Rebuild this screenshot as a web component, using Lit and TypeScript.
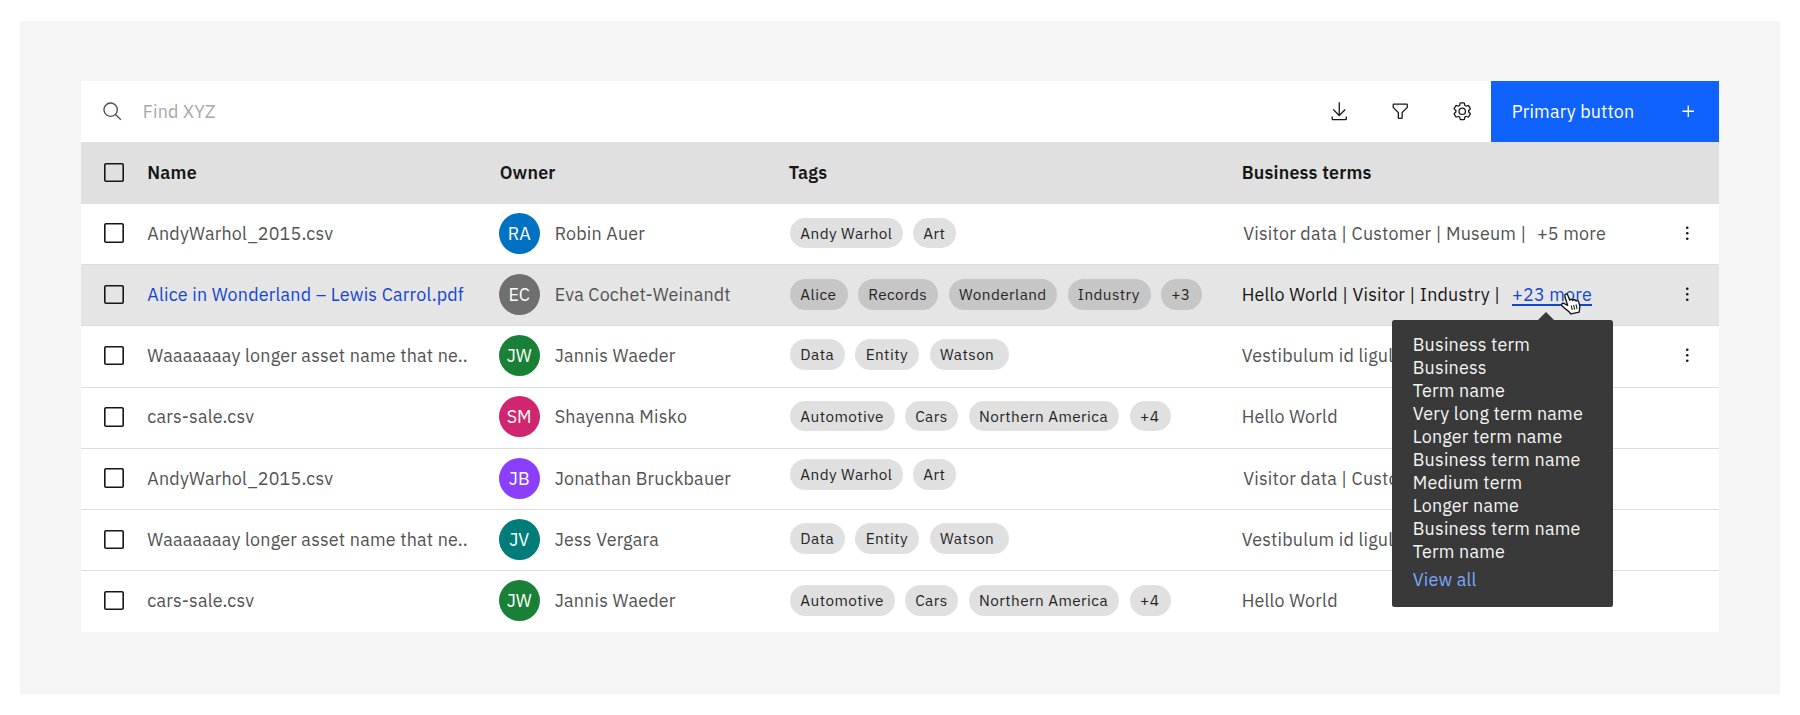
import { LitElement, html, svg, css, nothing } from "lit";
import { customElement } from "lit/decorators.js";
import { classMap } from "lit/directives/class-map.js";

interface Tag { label: string; size: number; }
interface Row {
  name: string;
  initials: string;
  tone: string;
  owner: string;
  tags: Tag[];
  lift: number;
  terms: string;
  inset?: boolean;
  more?: string;
  menu?: boolean;
  active?: boolean;
}

const tag = (label: string, size: number): Tag => ({ label, size });

const andyTags = [tag("Andy Warhol", 112.5), tag("Art", 43)];
const dataTags = [tag("Data", 55), tag("Entity", 64), tag("Watson", 79.5)];
const carTags = [tag("Automotive", 104.5), tag("Cars", 53.5), tag("Northern America", 150.8), tag("+4", 41)];

const rows: Row[] = [
  { name: "AndyWarhol_2015.csv", initials: "RA", tone: "blue", owner: "Robin Auer", tags: andyTags, lift: 0.2,
    terms: "Visitor data | Customer | Museum |", inset: true, more: "+5 more", menu: true },
  { name: "Alice in Wonderland – Lewis Carrol.pdf", initials: "EC", tone: "gray", owner: "Eva Cochet-Weinandt",
    tags: [tag("Alice", 57.5), tag("Records", 80.5), tag("Wonderland", 108.6), tag("Industry", 83), tag("+3", 41.2)],
    lift: 0, terms: "Hello World | Visitor | Industry |", more: "+23 more", menu: true, active: true },
  { name: "Waaaaaaay longer asset name that ne..", initials: "JW", tone: "green", owner: "Jannis Waeder", tags: dataTags, lift: 1,
    terms: "Vestibulum id ligula", menu: true },
  { name: "cars-sale.csv", initials: "SM", tone: "magenta", owner: "Shayenna Misko", tags: carTags, lift: 1,
    terms: "Hello World" },
  { name: "AndyWarhol_2015.csv", initials: "JB", tone: "purple", owner: "Jonathan Bruckbauer", tags: andyTags, lift: 3.5,
    terms: "Visitor data | Customer", inset: true },
  { name: "Waaaaaaay longer asset name that ne..", initials: "JV", tone: "teal", owner: "Jess Vergara", tags: dataTags, lift: 0.8,
    terms: "Vestibulum id ligula" },
  { name: "cars-sale.csv", initials: "JW", tone: "green", owner: "Jannis Waeder", tags: carTags, lift: 0.3,
    terms: "Hello World" },
];

const termList = [
  "Business term",
  "Business",
  "Term name",
  "Very long term name",
  "Longer term name",
  "Business term name",
  "Medium term",
  "Longer name",
  "Business term name",
  "Term name",
];

const icon = (shape: unknown, size = 20.5) =>
  html`<svg class="icon" width=${size} height=${size} viewBox="0 0 32 32" fill="currentColor">${shape}</svg>`;

const searchShape = svg`<path d="M29 27.586l-7.552-7.552a11.018 11.018 0 10-1.414 1.414L27.586 29zM4 13a9 9 0 119 9 9.01 9.01 0 01-9-9z"/>`;
const downloadShape = svg`<path d="M26 24v4H6v-4H4v4a2 2 0 002 2h20a2 2 0 002-2v-4zM26 14l-1.41-1.41L17 20.17V2h-2v18.17l-7.59-7.58L6 14l10 10 10-10z"/>`;
const filterShape = svg`<path d="M18 28h-4a2 2 0 01-2-2v-7.59L4.59 11A2 2 0 014 9.59V6a2 2 0 012-2h20a2 2 0 012 2v3.59a2 2 0 01-.59 1.41L20 18.41V26a2 2 0 01-2 2zM6 6v3.59l8 8V26h4v-8.41l8-8V6z"/>`;
const gearShape = svg`<path d="M27 16.76v-1.53l1.92-1.68A2 2 0 0029.3 11l-2.36-4a2 2 0 00-1.73-1 2 2 0 00-.64.1l-2.43.82a11.35 11.35 0 00-1.31-.75l-.51-2.52a2 2 0 00-2-1.61h-4.68a2 2 0 00-2 1.61l-.51 2.52a11.48 11.48 0 00-1.32.75l-2.38-.86A2 2 0 006.79 6a2 2 0 00-1.73 1L2.7 11a2 2 0 00.41 2.51L5 15.24v1.53l-1.89 1.68A2 2 0 002.7 21l2.36 4a2 2 0 001.73 1 2 2 0 00.64-.1l2.43-.82a11.35 11.35 0 001.31.75l.51 2.52a2 2 0 002 1.61h4.72a2 2 0 002-1.61l.51-2.52a11.48 11.48 0 001.32-.75l2.42.82a2 2 0 00.64.1 2 2 0 001.73-1l2.28-4a2 2 0 00-.41-2.51zM25.21 24l-3.43-1.16a8.86 8.86 0 01-2.71 1.57L18.36 28h-4.72l-.71-3.55a9.36 9.36 0 01-2.7-1.57L6.79 24l-2.36-4 2.72-2.4a8.9 8.9 0 010-3.13L4.43 12l2.36-4 3.43 1.16a8.86 8.86 0 012.71-1.57L13.64 4h4.72l.71 3.55a9.36 9.36 0 012.7 1.57L25.21 8l2.36 4-2.72 2.4a8.9 8.9 0 010 3.13L27.57 20zM16 22a6 6 0 116-6 5.94 5.94 0 01-6 6zm0-10a3.91 3.91 0 00-4 4 3.91 3.91 0 004 4 3.91 3.91 0 004-4 3.91 3.91 0 00-4-4z"/>`;
const plusShape = svg`<path d="M17 15V7h-2v8H7v2h8v8h2v-8h8v-2z"/>`;
const dotsShape = svg`<circle cx="16" cy="7.5" r="2"/><circle cx="16" cy="16" r="2"/><circle cx="16" cy="24.5" r="2"/>`;

@customElement("app-root")
export class AppRoot extends LitElement {
  static styles = css`
    :host {
      display: block;
      box-sizing: border-box;
      height: 715px;
      padding: 20.5px 20px 21px 20.3px;
      background: #fff;
      color: #525252;
      font: 400 17.9px/23px "IBM Plex Sans", Roboto, "Noto Sans", sans-serif;
      letter-spacing: 0.2px;
      white-space: nowrap;
      overflow: hidden;
    }
    * { box-sizing: border-box; }
    .stage { height: 100%; background: #f5f5f5; padding: 60px 61.2px 0 60.7px; }
    .icon { display: block; flex: none; }
    .toolbar { display: flex; height: 61.3px; background: #fff; align-items: center; }
    .search { flex: 1; display: flex; align-items: center; gap: 19.5px; padding-left: 21px; color: #a8a8a8; }
    .search .icon { color: #525252; margin-top: 1px; }
    .actions { display: flex; color: #161616; }
    .action { width: 61.4px; display: flex; justify-content: center; padding-left: 2.6px; }
    .primary { align-self: stretch; width: 227.5px; display: flex; align-items: center; justify-content: space-between; padding: 0 20.5px; background: #0f62fe; color: #fff; }
    .grid { display: grid; grid-template-columns: 66.3px 352.4px 289px 453px 1fr 62px; align-items: center; }
    .head { height: 61.2px; background: #e0e0e0; color: #161616; font-weight: 600; }
    .row { height: 61.25px; background: #fff; border-top: 1px solid #dcdcdc; padding-bottom: 2px; position: relative; }
    .row:first-child { border-top-color: #e0e0e0; }
    .row.active { background: #e5e5e5; }
    .box { width: 19.6px; height: 19.6px; margin-left: 23px; box-shadow: inset 0 0 0 1.6px #161616; border-radius: 2px; }
    .owner { display: flex; align-items: center; gap: 15px; margin-left: -1px; }
    .avatar { width: 41px; height: 41px; border-radius: 50%; display: grid; place-items: center; color: #fff; letter-spacing: 0; }
    .blue { background: #0072c3; }
    .gray { background: #6f6f6f; }
    .green { background: #198038; }
    .magenta { background: #d02670; }
    .purple { background: #8a3ffc; }
    .teal { background: #007d79; }
    .tags { display: flex; gap: 10.3px; margin-left: 1.4px; }
    .tag { height: 30.7px; border-radius: 16px; padding-left: 10.3px; background: #e0e0e0; color: #262626; font-size: 15.33px; line-height: 30.7px; letter-spacing: 0.41px; }
    .active .tag { background: #c6c6c6; }
    .terms { display: flex; gap: 12px; }
    .inset { padding-left: 1.5px; gap: 10.5px; }
    .active .terms { color: #161616; }
    .active .name, .active .more { color: #1446d2; }
    .more { position: relative; }
    .active .more::after { content: ""; position: absolute; left: 0; right: 0; bottom: 0; height: 1.5px; background: #1446d2; }
    .menu { justify-self: center; color: #161616; margin-right: 1.8px; }
    .tooltip { position: absolute; z-index: 2; top: 37px; left: -120px; width: 221px; height: 287.5px; padding: 13.2px 20.7px; border-radius: 2.5px; background: #393939; color: #f4f4f4; }
    .tooltip::before { content: ""; position: absolute; left: 145.5px; top: -8px; border: 8px solid transparent; border-top: 0; border-bottom-color: #393939; }
    .term { height: 23px; }
    .all { margin-top: 5px; color: #78a9ff; }
    .pointer { position: absolute; z-index: 3; left: 47.8px; top: 9.5px; }
  `;

  private overlay() {
    return html`
      <div class="tooltip">
        ${termList.map((t) => html`<div class="term">${t}</div>`)}
        <div class="all">View all</div>
      </div>
      <svg class="pointer" width="21" height="23" viewBox="0 0 20 22">
        <path d="M7.3 12.8 4.7 4.6C3.9 1.9 6.6.8 7.5 3.3L9.3 8C9.7 6.5 11.8 6.6 12.2 8.2 12.8 6.9 14.7 7.2 15.2 8.7 16 7.8 17.5 8.1 17.9 9.6L18.8 13C19.3 15.2 18.3 16.8 18.3 19.2L10.3 21C9.2 18.6 5 16.4 2.2 13.7.6 12.1 1.8 10.3 3.8 11Z" fill="#fff" stroke="#161616" stroke-width="1.3" stroke-linejoin="round"/>
        <path d="m10.7 12.8 1 4.6m1.3-5.1 1 4.6m1.3-5.1 1 4.6" stroke="#161616" stroke-width="1" fill="none"/>
      </svg>`;
  }

  private row(r: Row) {
    return html`
      <div class=${classMap({ grid: true, row: true, active: !!r.active })}>
        <span class="box"></span>
        <div class="name">${r.name}</div>
        <div class="owner"><span class="avatar ${r.tone}">${r.initials}</span>${r.owner}</div>
        <div class="tags" style="margin-bottom:${r.lift * 2}px">
          ${r.tags.map((t) => html`<span class="tag" style="width:${t.size}px">${t.label}</span>`)}
        </div>
        <div class=${classMap({ terms: true, inset: !!r.inset })}>
          <span>${r.terms}</span>
          ${r.more ? html`<span class="more">${r.more}${r.active ? this.overlay() : nothing}</span>` : nothing}
        </div>
        <span class="menu">${r.menu ? icon(dotsShape) : nothing}</span>
      </div>`;
  }

  render() {
    return html`
      <div class="stage">
        <div class="toolbar">
          <div class="search">${icon(searchShape, 21.3)}<span>Find XYZ</span></div>
          <div class="actions">
            <span class="action">${icon(downloadShape)}</span>
            <span class="action">${icon(filterShape)}</span>
            <span class="action">${icon(gearShape)}</span>
          </div>
          <div class="primary"><span>Primary button</span>${icon(plusShape)}</div>
        </div>
        <div class="grid head">
          <span class="box"></span><span>Name</span><span>Owner</span><span>Tags</span><span>Business terms</span>
        </div>
        <div>${rows.map((r) => this.row(r))}</div>
      </div>`;
  }
}
